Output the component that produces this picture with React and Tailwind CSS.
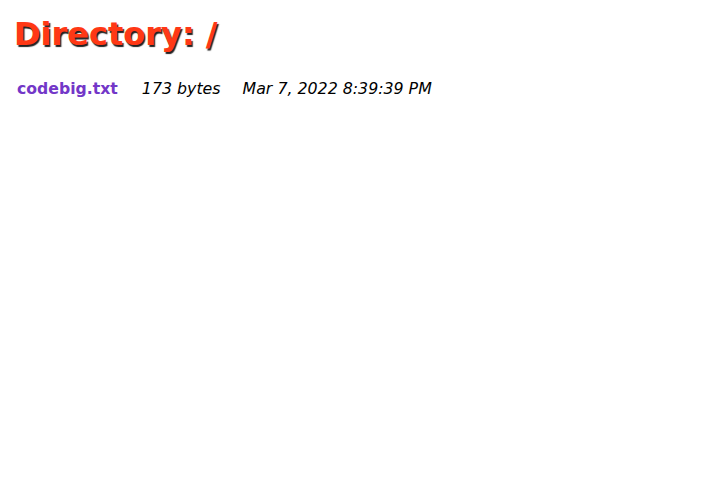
export default function App() {
  return (
    <div className="min-h-screen bg-white px-[14px] py-3 font-['DejaVu_Sans',sans-serif]">
      <h1 className="text-[32px] font-bold leading-[44px] text-[#ff3815] [text-shadow:1.5px_1.5px_1px_#222]">
        Directory: /
      </h1>
      <div className="mt-[21px] flex items-baseline">
        <a href="#" className="pl-[3px] text-[15.7px] font-bold text-[#7337c8]">codebig.txt</a>
        <span className="ml-[24px] text-[15.8px] italic text-black">173 bytes</span>
        <span className="ml-[22px] text-[15.8px] italic text-black">Mar 7, 2022 8:39:39 PM</span>
      </div>
    </div>
  );
}
